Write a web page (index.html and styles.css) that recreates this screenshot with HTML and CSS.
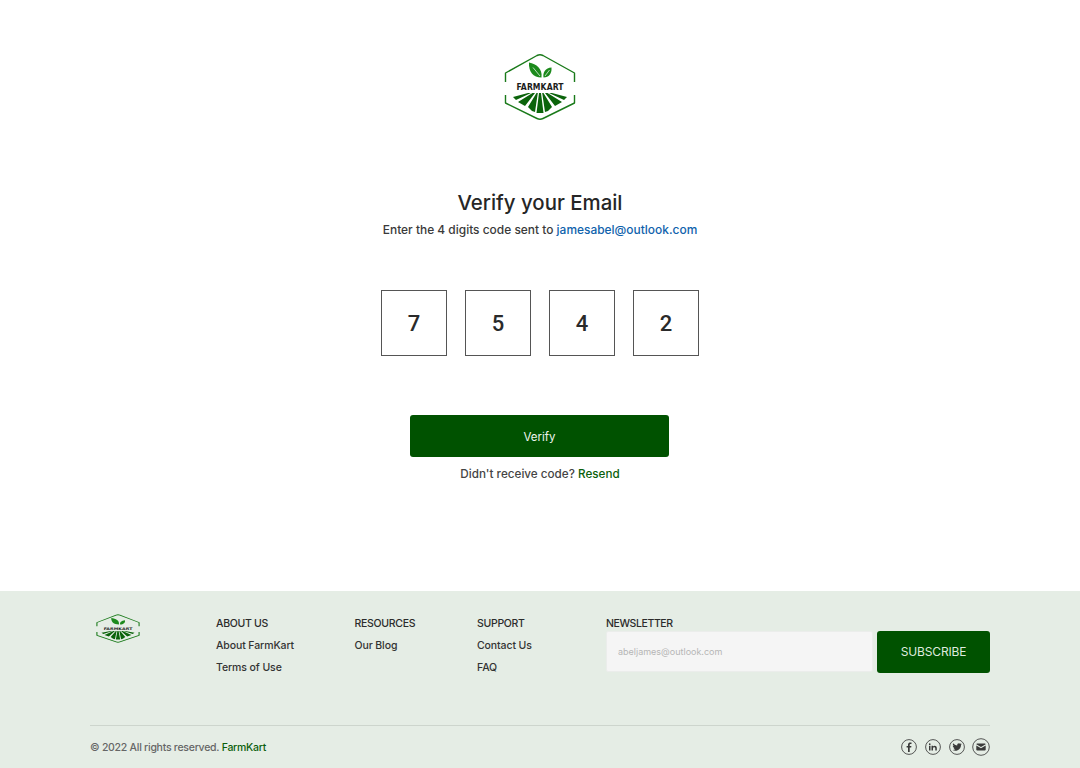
FILE: index.html
```html
<!DOCTYPE html>
<html lang="en">
<head>
<meta charset="utf-8">
<title>Verify your Email</title>
<link rel="stylesheet" href="styles.css">
</head>
<body>
<main class="verify">
  <svg class="logo" viewBox="0 0 72 68" preserveAspectRatio="none" role="img" aria-label="FarmKart">
    <path class="logo-line" d="M1.500 29V20L33 2.500Q36 1 39 2.500L70.500 20V29"/>
    <path class="logo-line" d="M1.500 42V50L33 65.500Q36 67 39 65.500L70.500 50V42"/>
    <path class="logo-leaf" d="M37.500 24.500C29 24.500 24.500 18.500 25 9.500 32.500 11 38.500 15.500 37.500 24.500Z"/>
    <path class="logo-leaf" d="M39.500 24.500C38.500 19.500 41.500 15 47.500 14.500 48 20.500 45 24.500 39.500 24.500Z"/>
    <path class="logo-vein" d="M29 14.500 36 23M45.500 17 41 23"/>
    <text x="36" y="36.500" class="logo-text" textLength="47" lengthAdjust="spacing">FARMKART</text>
    <path class="logo-field" d="M9 44 24 40H27L12 47Z M14 49 28.500 40H31L21 53Z M24 54 32.500 40H33.800L31 59 28 58Z M35 40H37L39.500 60H32.500Z M63 44 48 40H45L60 47Z M58 49 43.500 40H41L51 53Z M48 54 39.500 40H38.200L41 59 44 58Z"/>
  </svg>
  <h1 class="title">Verify your Email</h1>
  <p class="sub">Enter the 4 digits code sent to <a class="mail" href="#">jamesabel@outlook.com</a></p>
  <div class="code">
    <div class="digit">7</div>
    <div class="digit">5</div>
    <div class="digit">4</div>
    <div class="digit">2</div>
  </div>
  <button class="verify-btn" type="button">Verify</button>
  <p class="resend">Didn't receive code? <a class="green" href="#">Resend</a></p>
</main>
<footer class="footer">
  <div class="cols">
    <svg class="logo-small" viewBox="0 0 72 68" preserveAspectRatio="none" role="img" aria-label="FarmKart">
      <path class="logo-line line-small" d="M1.500 29V20L33 2.500Q36 1 39 2.500L70.500 20V29"/>
      <path class="logo-line line-small" d="M1.500 42V50L33 65.500Q36 67 39 65.500L70.500 50V42"/>
      <path class="logo-leaf" d="M37.500 24.500C29 24.500 24.500 18.500 25 9.500 32.500 11 38.500 15.500 37.500 24.500Z"/>
      <path class="logo-leaf" d="M39.500 24.500C38.500 19.500 41.500 15 47.500 14.500 48 20.500 45 24.500 39.500 24.500Z"/>
      <text x="36" y="37" class="logo-text" textLength="47" lengthAdjust="spacing">FARMKART</text>
      <path class="logo-field" d="M9 44 24 40H27L12 47Z M14 49 28.500 40H31L21 53Z M24 54 32.500 40H33.800L31 59 28 58Z M35 40H37L39.500 60H32.500Z M63 44 48 40H45L60 47Z M58 49 43.500 40H41L51 53Z M48 54 39.500 40H38.200L41 59 44 58Z"/>
    </svg>
    <div class="col">
      <h2 class="col-head">ABOUT US</h2>
      <a class="link" href="#">About FarmKart</a>
      <a class="link" href="#">Terms of Use</a>
    </div>
    <div class="col">
      <h2 class="col-head">RESOURCES</h2>
      <a class="link" href="#">Our Blog</a>
    </div>
    <div class="col">
      <h2 class="col-head">SUPPORT</h2>
      <a class="link" href="#">Contact Us</a>
      <a class="link" href="#">FAQ</a>
    </div>
    <div class="news">
      <h2 class="col-head news-head">NEWSLETTER</h2>
      <div class="news-row">
        <input class="news-input" type="text" placeholder="abeljames@outlook.com">
        <button class="sub-btn" type="button">SUBSCRIBE</button>
      </div>
    </div>
  </div>
  <div class="bottom">
    <p class="copy">© 2022 All rights reserved. <a class="green" href="#">FarmKart</a></p>
    <div class="socials">
      <svg class="social" viewBox="0 0 16 16" width="16" height="16"><circle cx="8" cy="8" r="7.400" class="ring"/><path d="M8.700 13V8.600H10.200L10.400 6.900H8.700V5.900C8.700 5.400 8.900 5 9.500 5H10.500V3.500C9 3.200 7 3.300 7 5.600V6.900H5.600V8.600H7V13Z" class="glyph"/></svg>
      <svg class="social" viewBox="0 0 16 16" width="16" height="16"><circle cx="8" cy="8" r="7.400" class="ring"/><path d="M4 6.800H5.500V11.500H4Z M4.750 4.300A.85 .85 0 1 1 4.750 6 .85 .85 0 0 1 4.750 4.300Z M6.500 6.800H8V7.500C8.800 6.300 11.800 6.200 11.800 9V11.500H10.300V9.400C10.300 7.800 8 7.900 8 9.400V11.500H6.500Z" class="glyph"/></svg>
      <svg class="social" viewBox="0 0 16 16" width="16" height="16"><circle cx="8" cy="8" r="7.400" class="ring"/><path d="M12.800 5C12.400 5.200 12 5.300 11.600 5.300 12 5.100 12.300 4.700 12.500 4.300 12.100 4.500 11.700 4.700 11.200 4.800 10.100 3.600 8 4.500 8.200 6.400 6.600 6.300 5.100 5.500 4.100 4.300 3.600 5.200 3.900 6.300 4.700 6.900 4.400 6.900 4.100 6.800 3.800 6.700 3.800 7.700 4.500 8.500 5.400 8.700 5.100 8.800 4.800 8.800 4.500 8.800 4.800 9.600 5.500 10.100 6.300 10.100 5.500 10.800 4.500 11.100 3.500 11 7.800 13.400 12 10.200 12 6 12.300 5.700 12.600 5.400 12.800 5Z" class="glyph"/></svg>
      <svg class="social mail-icon" viewBox="0 0 18 18" width="18" height="18"><circle cx="9" cy="9" r="8.300" class="ring"/><path d="M4.300 6.300C4.300 5.800 4.700 5.500 5.200 5.500H12.800C13.300 5.500 13.700 5.800 13.700 6.300L9 9ZM4.300 7.500 9 10.200 13.700 7.500V11.700C13.700 12.200 13.300 12.500 12.800 12.500H5.200C4.700 12.500 4.300 12.200 4.300 11.700Z" class="glyph"/></svg>
    </div>
  </div>
</footer>
</body>
</html>
```

FILE: styles.css
```css
* { box-sizing: border-box; }
html, body { margin: 0; padding: 0; }
body {
  width: 1080px;
  height: 768px;
  overflow: hidden;
  background: #fff;
  color: #262626;
  font-family: Inter, "Open Sans", "Liberation Sans", sans-serif;
}
a { text-decoration: none; }

.verify {
  height: 591px;
  padding-top: 53px;
  display: flex;
  flex-direction: column;
  align-items: center;
}
.logo { display: block; width: 72px; height: 68px; }
.logo-line { fill: none; stroke: #1a7a1a; stroke-width: 1.4; stroke-linejoin: round; }
.line-small { stroke-width: 1.8; }
.logo-leaf { fill: #1c8a1c; }
.logo-vein { fill: none; stroke: #fff; stroke-width: .7; }
.logo-field { fill: #0b640b; }
.logo-text {
  font: 700 8.500px "DejaVu Sans Condensed", "Liberation Sans", sans-serif;
  text-anchor: middle;
  fill: #1c1c1c;
}
.title {
  margin: 66px 0 0;
  font-size: 20.400px;
  line-height: 32px;
  font-weight: 500;
  color: #262626;
}
.sub {
  margin: 1px 0 0;
  font-size: 11.950px;
  line-height: 20px;
  font-weight: 500;
  color: #3a3a3a;
}
.mail { color: #0f62ac; }
.code {
  margin-top: 50px;
  display: flex;
  gap: 18px;
}
.digit {
  width: 66px;
  height: 66px;
  border: 1px solid #555;
  display: flex;
  align-items: center;
  justify-content: center;
  font-family: Roboto, Inter, sans-serif;
  font-size: 22px;
  font-weight: 500;
  color: #2a2a2a;
}
.verify-btn {
  margin: 59px 1px 0 0;
  width: 259px;
  height: 42px;
  padding-top: 2px;
  background: #005200;
  color: #eef5ee;
  border: 0;
  border-radius: 3px;
  font: 400 11.500px Inter, sans-serif;
}
.resend {
  margin: 7px 0 0;
  font-size: 11.700px;
  line-height: 20px;
  font-weight: 500;
  color: #444;
}
.green { color: #0b5f0b; }

.footer {
  height: 177px;
  background: #e5ede5;
  padding: 24px 90px 0;
}
.cols {
  display: grid;
  grid-template-columns: 126px 138.500px 122.500px 129px 1fr;
  height: 111px;
  border-bottom: 1px solid #cdd5cd;
}
.logo-small { display: block; width: 44px; height: 29px; margin: -1px 0 0 6px; }
.col { display: flex; flex-direction: column; }
.col-head {
  margin: 0;
  font-size: 10.500px;
  line-height: 18px;
  font-weight: 500;
  letter-spacing: -.3px;
  color: #2b2b2b;
}
.link {
  margin-top: 4px;
  font-size: 10.500px;
  line-height: 18px;
  font-weight: 500;
  letter-spacing: -.1px;
  color: #333;
}
.news-row {
  display: flex;
  gap: 4px;
  align-items: flex-start;
}
.news-head { height: 16px; letter-spacing: -.4px; }
.news-input {
  width: 267px;
  height: 41px;
  padding: 0 11px;
  background: #f5f5f5;
  border: 1px solid #ebedeb;
  border-radius: 2px;
  font: 400 9px Inter, sans-serif;
  outline: none;
}
.news-input::placeholder { color: #b5b5b5; opacity: 1; }
.sub-btn {
  width: 113px;
  height: 42px;
  padding-bottom: 2px;
  background: #005200;
  color: #dfeadf;
  border: 0;
  border-radius: 3px;
  font: 400 12px Inter, sans-serif;
  letter-spacing: -.15px;
}
.bottom {
  height: 42px;
  display: flex;
  align-items: center;
  justify-content: space-between;
}
.copy {
  margin: 0;
  font-size: 10.500px;
  font-weight: 500;
  letter-spacing: -.26px;
  color: #666;
}
.socials {
  display: flex;
  align-items: center;
  gap: 8px;
}
.social { display: block; }
.mail-icon { margin-left: -1px; }
.ring { fill: none; stroke: #444; stroke-width: .9; }
.glyph { fill: #3a3a3a; }
```
